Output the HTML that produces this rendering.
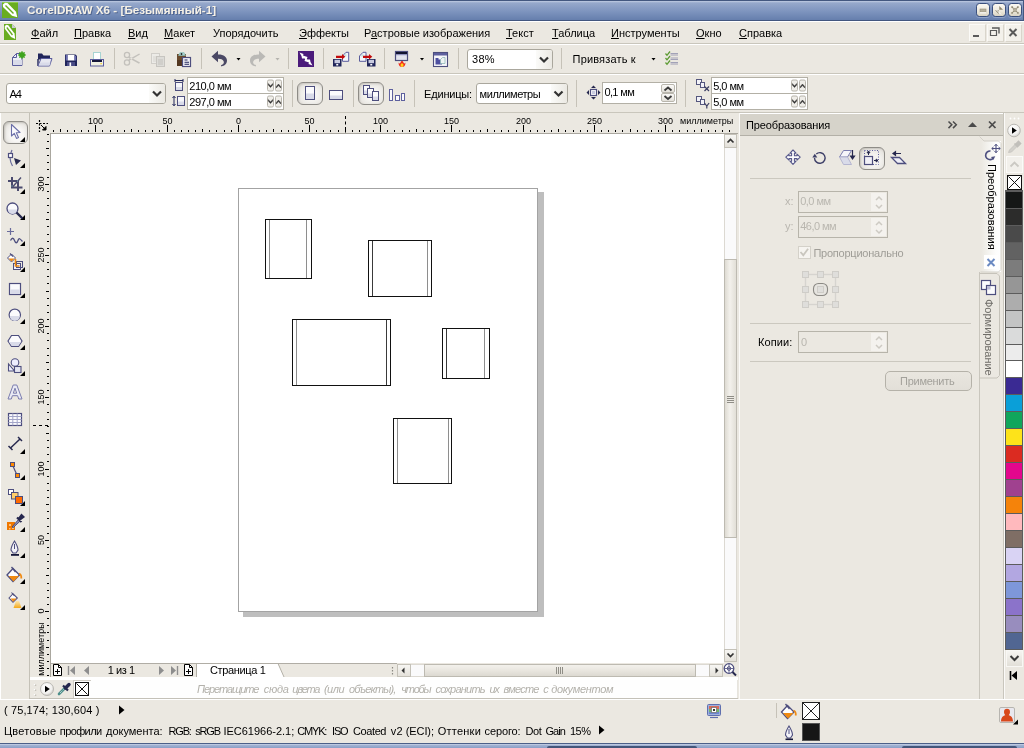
<!DOCTYPE html>
<html><head><meta charset="utf-8"><title>CorelDRAW X6</title>
<style>
*{box-sizing:border-box;margin:0;padding:0}
html,body{width:1024px;height:748px;overflow:hidden;background:#ebe8e1;font-family:"Liberation Sans",sans-serif;font-size:11px;color:#000}
.a{position:absolute}
#w{position:absolute;left:0;top:0;width:1024px;height:748px;will-change:transform;overflow:hidden}
.x{position:absolute;font-size:11px;line-height:13px;white-space:nowrap}
svg{position:absolute;left:0;top:0;overflow:visible}

#title{left:0;top:0;width:1024px;height:21px;border-right:1px solid #43577f;background:linear-gradient(#43577f 0,#43577f 1px,#c2cde3 1px,#a9b9d6 2px,#96a8cb 3px,#8a9ec5 7px,#7c93bd 12px,#6e86b3 17px,#667fad 20px,#42567f 20px,#42567f 21px)}
#title .t{left:27px;top:3px;font-weight:bold;font-size:11.7px;line-height:14px;color:#f6f1e6;white-space:nowrap;text-shadow:1px 1px 0 #51668f}
.wb{position:absolute;top:3px;width:14px;height:14px;border:1px solid #3b507d;border-radius:3.5px;box-shadow:0 1px 0 #8ea2c8;background:linear-gradient(#fbf9f2,#ece8dc 60%,#d8d3c2)}
.mb{position:absolute;top:24px;width:17px;height:18px;background:#f3f1eb;border:1px solid #fbfaf7;border-right-color:#d9d5cb;border-bottom-color:#d9d5cb}
.cb{position:absolute;background:#fff;border:1px solid #aaa79d;border-radius:3px}
.cb i{position:absolute;right:0;top:0;bottom:0;width:16px;background:linear-gradient(90deg,#fbfbf9,#ebe9e3);border-radius:0 2px 2px 0}
.fld{position:absolute;background:#fff;border:1px solid #b3b0a6}
.pbtn{position:absolute;border:1px solid #8e8c87;border-radius:6px;background:radial-gradient(ellipse at 55% 55%,#f7f6f3 30%,#dfdcd6 100%);box-shadow:inset 1px 1px 2px #c9c6c0}
.sp{position:absolute;border:1px solid #b9b6ad;border-radius:2px;background:linear-gradient(#fbfaf8,#e3e0d9)}

.rl{position:absolute;font-size:9px;line-height:10px;white-space:nowrap;text-align:center;width:30px}
.rv{position:absolute;font-size:9px;line-height:10px;white-space:nowrap;text-align:center;width:30px;height:10px;transform:rotate(-90deg);transform-origin:50% 50%}

.sbb{position:absolute;border:1px solid #c9c6bd;background:linear-gradient(90deg,#f6f5f1,#e6e3dc);}

.dfl{position:absolute;border:1px solid #b7b4aa;background:#ebe8e1}
.dfl i{position:absolute;right:1px;top:1px;bottom:1px;width:15px;background:#f4f2ee}
.vt{position:absolute;font-size:11px;line-height:13px;white-space:nowrap;transform:rotate(90deg);transform-origin:0 0}
</style></head><body>
<div id="w"><div id="title" class="a"><div class="a t">CorelDRAW X6 - [Безымянный-1]</div><div class="wb" style="left:976px"></div><div class="wb" style="left:992px"></div><div class="wb" style="left:1008px"></div></div><svg width="1024" height="748" viewBox="0 0 1024 748" ><rect x="2" y="2" width="16" height="16" fill="#69ad21"/><rect x="2" y="2" width="16" height="1" fill="#8fcc4a"/><path d="M2.800 4.500L5 2.800L7.500 3L16 11.800L17.300 17.300L12 15.800L3 7z" fill="#fff"/><path d="M5.500 5.500L13.500 13.500" stroke="#69ad21" stroke-width="1.500"/><rect x="980" y="9" width="6" height="3" fill="#b5af9c" stroke="#98917c" stroke-width=".6"/><rect x="980" y="12.3" width="6" height="1" fill="#fff"/><path d="M999.300 6l3.700 3.700h-3.700z M998.700 14l-3.700-3.700h3.700z" fill="#8d866f"/><path d="M996 9.500l5 5" stroke="#fff" stroke-width="1"/><path d="M1011.500 6.500l7 7M1018.500 6.500l-7 7" stroke="#8d866f" stroke-width="1.700" stroke-dasharray="2 .7"/><circle cx="1015" cy="10" r="1.500" fill="#b5af9c"/></svg><div class="a" style="left:0px;top:21px;width:1024px;height:1px;background:#fff"></div><span class="x" style="left:31px;top:27px;"><u>Ф</u>айл</span><span class="x" style="left:74px;top:27px;"><u>П</u>равка</span><span class="x" style="left:128px;top:27px;"><u>В</u>ид</span><span class="x" style="left:164px;top:27px;"><u>М</u>акет</span><span class="x" style="left:213px;top:27px;">Упоря<u>д</u>очить</span><span class="x" style="left:299px;top:27px;"><u>Э</u>ффекты</span><span class="x" style="left:364px;top:27px;">Р<u>а</u>стровые изображения</span><span class="x" style="left:506px;top:27px;"><u>Т</u>екст</span><span class="x" style="left:552px;top:27px;"><u>Т</u>аблица</span><span class="x" style="left:611px;top:27px;"><u>И</u>нструменты</span><span class="x" style="left:696px;top:27px;"><u>О</u>кно</span><span class="x" style="left:739px;top:27px;"><u>С</u>правка</span><div class="mb" style="left:969px"></div><div class="mb" style="left:987px"></div><div class="mb" style="left:1005px"></div><div class="a" style="left:0px;top:43px;width:1024px;height:1px;background:#c9c6bc"></div><div class="a" style="left:0px;top:44px;width:1024px;height:1px;background:#fff"></div><svg width="1024" height="748" viewBox="0 0 1024 748" ><path d="M4 24h8l4 4v12h-12z" fill="#69ad21"/><path d="M12 24v4h4z" fill="#c9c9d6"/><path d="M4.800 26L6.500 24.800L8.300 25.300L14.500 33.500L15.200 39L11 37L4.800 28.800z" fill="#fff"/><path d="M6.800 27.500L12.500 35" stroke="#69ad21" stroke-width="1.300"/><rect x="973" y="35" width="6" height="2" fill="#5a5a5a"/><path d="M990.5 30.5h6v5h-6z" fill="none" stroke="#5a5a5a" stroke-width="1.2"/><path d="M992 28h7v5.5" fill="none" stroke="#5a5a5a" stroke-width="1.4"/><path d="M1009.5 29l7 7M1016.5 29l-7 7" stroke="#5a5a5a" stroke-width="2"/></svg><div class="a" style="left:114px;top:48px;width:1px;height:21px;background:#c6c2b8"></div><div class="a" style="left:201px;top:48px;width:1px;height:21px;background:#c6c2b8"></div><div class="a" style="left:288px;top:48px;width:1px;height:21px;background:#c6c2b8"></div><div class="a" style="left:323px;top:48px;width:1px;height:21px;background:#c6c2b8"></div><div class="a" style="left:384px;top:48px;width:1px;height:21px;background:#c6c2b8"></div><div class="a" style="left:458px;top:48px;width:1px;height:21px;background:#c6c2b8"></div><div class="a" style="left:561px;top:48px;width:1px;height:21px;background:#c6c2b8"></div><div class="a" style="left:0px;top:73px;width:1024px;height:1px;background:#c9c6bc"></div><div class="a" style="left:0px;top:74px;width:1024px;height:1px;background:#fff"></div><div class="cb" style="left:467px;top:49px;width:86px;height:21px"><i></i></div><span class="x" style="left:472.1px;top:53px;letter-spacing:0.23px;;">38%</span><span class="x" style="left:572.6px;top:53px;letter-spacing:0.16px;;">Привязать к</span><svg width="1024" height="748" viewBox="0 0 1024 748" ><path d="M12.5 57.5l4-4h5.5v12h-9.5z" fill="#eef0f6" stroke="#5a5c9c" stroke-width="1"/><path d="M13 60h9v5h-9z" fill="#d9dbe9"/><path d="M12.5 57.5h4v-4" fill="none" stroke="#5a5c9c" stroke-width="1"/><circle cx="22" cy="55" r="2.8" fill="#2f9a12"/><path d="M22 51.3v7.4M18.3 55h7.4M19.4 52.4l5.2 5.2M24.6 52.4l-5.2 5.2" stroke="#3fa51d" stroke-width="1.3"/><path d="M38 53.5h4l1.5 2h6.5v4h-12z" fill="#20255a"/><path d="M38 59v7" stroke="#20255a" stroke-width="1.4"/><path d="M41 58.5h11l-2.5 7.5h-11.5z" fill="#e6e7f0" stroke="#5a5c9c" stroke-width="1"/><path d="M40 62.5h10.5l-1 3h-10.5z" fill="#d9dbe9"/><path d="M65 54.5h10.5l1.5 1.5v10h-12z" fill="#20255a"/><rect x="67.5" y="55" width="7" height="5.5" fill="#fff"/><rect x="65.8" y="55" width="1.7" height="5.5" fill="#6e70b4"/><rect x="74.5" y="55.8" width="1.7" height="4.7" fill="#6e70b4"/><rect x="67" y="62" width="8" height="4" fill="#4a4c86"/><rect x="69.5" y="62.5" width="1.6" height="3.5" fill="#fff"/><rect x="93.5" y="52.5" width="7" height="8" fill="#fff" stroke="#a8d4d2" stroke-width="1"/><rect x="90.5" y="59.5" width="13" height="6.5" fill="#f1f1e3" stroke="#5a5c9c" stroke-width="1"/><rect x="92" y="60" width="10" height="2" fill="#16183a"/><rect x="100.5" y="63" width="1.2" height="1.2" fill="#f3c400"/><circle cx="127" cy="55" r="2.6" fill="none" stroke="#c3c1bc" stroke-width="1.3"/><circle cx="127" cy="62.5" r="2.6" fill="none" stroke="#c3c1bc" stroke-width="1.3"/><path d="M129 56.5L140 62.5L139 63.8L128.5 58z M129 61L140 54.5L139.2 53.5L128.5 59.5z" fill="#c3c1bc"/><rect x="151.5" y="53.5" width="8" height="10" fill="#ecebe7" stroke="#d0cec9"/><path d="M153 57h4M153 59h4M153 61h3" stroke="#d6d4cf" stroke-width="1"/><rect x="156.500" y="56.5" width="8" height="10" fill="#dddcd8" stroke="#c7c5c0"/><path d="M158 60h5M158 62h5M158 64h5" stroke="#c3c1bc" stroke-width="1"/><rect x="177" y="54" width="9" height="12" fill="#6a4a2c"/><rect x="177" y="60" width="9" height="6" fill="#523620"/><path d="M178.500 55.500l1.500-3h4l1.500 3z" fill="#a5d3cf" stroke="#8abab6" stroke-width=".6"/><circle cx="181.500" cy="54" r=".9" fill="#222"/><rect x="182.500" y="57.500" width="8" height="9" fill="#f3f3f8" stroke="#4d4e7e" stroke-width="1.2"/><path d="M184.500 60h3M184.500 62.300h4.500M184.500 64.300h4.500" stroke="#20255a" stroke-width="1.1"/><path d="M211.500 56.500l6.500-5.700v3.600c5.500-.2 9 2.400 9 6.200c0 3.400-2.400 5.400-5.600 5.800l-.5-1.200c2.600-.8 3.600-2.500 2.600-4.300c-.9-1.600-2.900-2.300-5.500-2.200v3.600z" fill="#4b4965"/><path d="M236.5 58h4l-2 2.500z" fill="#000"/><path d="M265.500 56.500l-6.500-5.700v3.600c-5.500-.2-9 2.400-9 6.200c0 3.400 2.400 5.400 5.600 5.800l.5-1.200c-2.600-.8-3.600-2.500-2.600-4.300c.9-1.600 2.900-2.300 5.500-2.200v3.600z" fill="#bab9b6"/><path d="M275.5 58h4l-2 2.500z" fill="#b5b3ae"/><rect x="298" y="51" width="16" height="16" fill="#4b1b7b"/><path d="M299.500 52.500L303.500 54L303 55.500L307.500 57L306.500 60L304.500 58.500L302 58.500L301.500 56z M312.500 65.500L308.500 64L309 62.500L304.500 61L305.500 58L307.500 59.500L310 59.500L310.500 62z" fill="#fff"/><rect x="333" y="59" width="8.5" height="7.5" fill="#20255a"/><rect x="334.5" y="59.8" width="5.5" height="3.375" fill="#c9cbe0"/><rect x="336.25" y="63.9" width="2" height="1.6" fill="#fff"/><path d="M342.500 56l3.500-3.700h2.700v9h-6.200z" fill="#f4f6fa" stroke="#5a5c9c" stroke-width="1"/><path d="M343.500 56.500l2.800-3v3z" fill="#bfe0dc"/><path d="M336 55.700h6v-1.700l3.300 2.800l-3.300 2.800v-1.700h-6z" fill="#c20a0a"/><path d="M359.500 56l3.500-3.700h3v9h-6.500z" fill="#f4f6fa" stroke="#5a5c9c" stroke-width="1"/><path d="M360.500 56.500l2.800-3v3z" fill="#bfe0dc"/><rect x="367" y="59" width="8.5" height="7.5" fill="#20255a"/><rect x="368.5" y="59.8" width="5.5" height="3.375" fill="#c9cbe0"/><rect x="370.25" y="63.9" width="2" height="1.6" fill="#fff"/><path d="M363 55.700h6v-1.700l3.300 2.800l-3.300 2.800v-1.700h-6z" fill="#c20a0a"/><rect x="395.500" y="51.500" width="12" height="9" fill="#e3e4ee" stroke="#4d4e7e" stroke-width="1.2"/><rect x="396" y="52" width="11" height="2.200" fill="#121430"/><rect x="396" y="54.200" width="11" height="1" fill="#8587b8"/><path d="M398.500 62.500c0 3 1.500 4.500 3.500 4.500s3.500-1.500 3.500-4.500c-1 1.200-1.600 1.200-2 0c-.6-1.200-1-1.500-1.500-1.500c-.5 0-.9.300-1.500 1.500c-.4 1.200-1 1.200-2 0z" fill="#f0281a"/><path d="M400.500 65c0 1.300.7 2 1.500 2s1.500-.7 1.500-2c0-.8-.7-1.800-1.500-1.800s-1.500 1-1.500 1.800z" fill="#ffd21a"/><path d="M420.0 58h4l-2 2.500z" fill="#000"/><rect x="433.500" y="52.500" width="14" height="14" fill="#f6f6fa" stroke="#4d4e7e" stroke-width="1.1"/><rect x="434" y="53" width="13" height="2.500" fill="#5e609e"/><path d="M435.500 58h3v1.500h3.500v5h-6.500z" fill="#4e50a0"/><path d="M440.500 59.500l2-2h2.500v6h-4.500z" fill="#eef3f3" stroke="#8fb8b6" stroke-width=".8"/><path d="M540 57.5l4 4l4 -4" fill="none" stroke="#333" stroke-width="2.2" /><path d="M651.5 58h4l-2 2.500z" fill="#000"/><path d="M670.500 53.5h7.500M670.500 55.0h7.500" stroke="#9a9ab2" stroke-width=".9"/><path d="M665.500 53.5l1.500 1.800l3-3.800" fill="none" stroke="#5c9a32" stroke-width="1.3"/><path d="M670.500 58h7.500M670.500 59.5h7.500" stroke="#9a9ab2" stroke-width=".9"/><path d="M665.500 58l1.500 1.800l3-3.800" fill="none" stroke="#5c9a32" stroke-width="1.3"/><path d="M670.500 62.5h7.500M670.500 64.0h7.500" stroke="#9a9ab2" stroke-width=".9"/><path d="M665.500 62.5l1.500 1.800l3-3.800" fill="none" stroke="#5c9a32" stroke-width="1.3"/></svg><div class="cb" style="left:6px;top:83px;width:160px;height:21px"><i></i></div><span class="x" style="left:9.6px;top:88px;letter-spacing:-1.20px;;">A4</span><div class="fld" style="left:187px;top:77px;width:97px;height:17px"></div><div class="fld" style="left:187px;top:93px;width:97px;height:17px"></div><span class="x" style="left:189.3px;top:80px;letter-spacing:-0.49px;;">210,0 мм</span><span class="x" style="left:189.3px;top:96px;letter-spacing:-0.49px;;">297,0 мм</span><div class="a" style="left:292px;top:80px;width:1px;height:27px;background:#c6c2b8"></div><div class="a" style="left:353px;top:80px;width:1px;height:27px;background:#c6c2b8"></div><div class="a" style="left:414px;top:80px;width:1px;height:27px;background:#c6c2b8"></div><div class="a" style="left:576px;top:80px;width:1px;height:27px;background:#c6c2b8"></div><div class="a" style="left:685px;top:80px;width:1px;height:27px;background:#c6c2b8"></div><div class="pbtn" style="left:297px;top:82px;width:26px;height:23px"></div><div class="pbtn" style="left:358px;top:82px;width:26px;height:23px"></div><span class="x" style="left:424.1px;top:88px;letter-spacing:-0.20px;;">Единицы:</span><div class="cb" style="left:476px;top:83px;width:92px;height:21px"><i></i></div><span class="x" style="left:479.6px;top:88px;letter-spacing:-0.45px;;">миллиметры</span><div class="fld" style="left:602px;top:82px;width:75px;height:22px"></div><span class="x" style="left:604.4px;top:86px;letter-spacing:-0.60px;;">0,1 мм</span><div class="sp" style="left:661px;top:84px;width:14px;height:9px"></div><div class="sp" style="left:661px;top:93px;width:14px;height:9px"></div><div class="fld" style="left:711px;top:77px;width:97px;height:17px"></div><div class="fld" style="left:711px;top:93px;width:97px;height:17px"></div><span class="x" style="left:713.2px;top:80px;letter-spacing:-0.52px;;">5,0 мм</span><span class="x" style="left:713.2px;top:96px;letter-spacing:-0.52px;;">5,0 мм</span><div class="a" style="left:0px;top:112px;width:1024px;height:1px;background:#c9c6bc"></div><svg width="1024" height="748" viewBox="0 0 1024 748" ><path d="M153 91.5l4 4l4 -4" fill="none" stroke="#333" stroke-width="2.2" /><path d="M554.5 91.5l4 4l4 -4" fill="none" stroke="#333" stroke-width="2.2" /><path d="M175 79v3M183 79v3M175 80.500h8" stroke="#20255a" stroke-width="1"/><rect x="175.500" y="82.500" width="7" height="8" fill="#f6f6fa" stroke="#4d4e7e"/><rect x="176" y="87" width="6" height="3" fill="#d9dbe9"/><path d="M174 96.500v9M172.500 98l1.500-1.800l1.500 1.800M172.500 104l1.500 1.800l1.500-1.800" fill="none" stroke="#20255a" stroke-width="1"/><rect x="177.500" y="96.500" width="7" height="9" fill="#f6f6fa" stroke="#4d4e7e"/><rect x="178" y="101.500" width="6" height="3.500" fill="#d9dbe9"/><rect x="267.5" y="80.0" width="6" height="11" rx="1.500" fill="#efede8" stroke="#b8b5ac"/><path d="M268.3 83.5l2.200 2.400l2.200-2.400v1.600l-2.200 2.400l-2.200-2.400z" fill="#2e2e2e" stroke="#2e2e2e" stroke-width=".4"/><rect x="275.5" y="80.0" width="6" height="11" rx="1.500" fill="#efede8" stroke="#b8b5ac"/><path d="M276.3 88.0l2.200-2.400l2.200 2.400v-1.600l-2.200-2.400l-2.200 2.400z" fill="#2e2e2e" stroke="#2e2e2e" stroke-width=".4"/><rect x="267.5" y="96.0" width="6" height="11" rx="1.500" fill="#efede8" stroke="#b8b5ac"/><path d="M268.3 99.5l2.200 2.400l2.200-2.400v1.600l-2.200 2.400l-2.200-2.400z" fill="#2e2e2e" stroke="#2e2e2e" stroke-width=".4"/><rect x="275.5" y="96.0" width="6" height="11" rx="1.500" fill="#efede8" stroke="#b8b5ac"/><path d="M276.3 104.0l2.200-2.400l2.200 2.400v-1.600l-2.200-2.400l-2.200 2.400z" fill="#2e2e2e" stroke="#2e2e2e" stroke-width=".4"/><rect x="791.5" y="80.0" width="6" height="11" rx="1.500" fill="#efede8" stroke="#b8b5ac"/><path d="M792.3 83.5l2.200 2.400l2.200-2.400v1.600l-2.200 2.400l-2.200-2.400z" fill="#2e2e2e" stroke="#2e2e2e" stroke-width=".4"/><rect x="799.5" y="80.0" width="6" height="11" rx="1.500" fill="#efede8" stroke="#b8b5ac"/><path d="M800.3 88.0l2.200-2.400l2.200 2.400v-1.600l-2.200-2.400l-2.200 2.400z" fill="#2e2e2e" stroke="#2e2e2e" stroke-width=".4"/><rect x="791.5" y="96.0" width="6" height="11" rx="1.500" fill="#efede8" stroke="#b8b5ac"/><path d="M792.3 99.5l2.200 2.400l2.200-2.400v1.600l-2.200 2.400l-2.200-2.400z" fill="#2e2e2e" stroke="#2e2e2e" stroke-width=".4"/><rect x="799.5" y="96.0" width="6" height="11" rx="1.500" fill="#efede8" stroke="#b8b5ac"/><path d="M800.3 104.0l2.200-2.400l2.200 2.400v-1.600l-2.200-2.400l-2.200 2.400z" fill="#2e2e2e" stroke="#2e2e2e" stroke-width=".4"/><rect x="305.500" y="86.500" width="9" height="13" fill="#fbfbfd" stroke="#4d4e7e"/><rect x="306" y="93.500" width="8" height="5.500" fill="#d9dbe9"/><rect x="329.500" y="90.500" width="13" height="9" fill="#fbfbfd" stroke="#4d4e7e"/><rect x="330" y="95.500" width="12" height="3.500" fill="#d9dbe9"/><rect x="363.5" y="85.5" width="6" height="9" fill="#fbfbfd" stroke="#4d4e7e"/><rect x="364.0" y="90.5" width="5" height="3.500" fill="#d9dbe9"/><rect x="367.5" y="88.5" width="6" height="9" fill="#fbfbfd" stroke="#4d4e7e"/><rect x="368.0" y="93.5" width="5" height="3.500" fill="#d9dbe9"/><rect x="372.5" y="91.5" width="6" height="9" fill="#fbfbfd" stroke="#4d4e7e"/><rect x="373.0" y="96.5" width="5" height="3.500" fill="#d9dbe9"/><rect x="389.500" y="89.500" width="3" height="11" fill="#fbfbfd" stroke="#5e609e"/><rect x="395.500" y="95.500" width="4" height="5" fill="#fbfbfd" stroke="#5e609e"/><rect x="401.500" y="93.500" width="3" height="7" fill="#fbfbfd" stroke="#5e609e"/><rect x="590.500" y="89.500" width="6" height="6" fill="#fff" stroke="#4d4e7e" stroke-width="1.200"/><rect x="592" y="91" width="3" height="3" fill="#c9cbe0"/><path d="M593.500 85.500l2.500 2.500h-5z M593.500 99.500l2.500-2.500h-5z M586.500 92.500l2.500-2.500v5z M600.500 92.500l-2.500-2.500v5z" fill="#26284e"/><path d="M664.500 90.500l3.500-3l3.500 3" fill="none" stroke="#3a3a3a" stroke-width="1.800"/><path d="M664.500 96l3.500 3l3.500-3" fill="none" stroke="#3a3a3a" stroke-width="1.800"/><rect x="696.500" y="79.5" width="5" height="5" fill="#f2f2f8" stroke="#55577e"/><rect x="700.500" y="82.5" width="4" height="5" fill="#f2f2f8" stroke="#55577e"/><path d="M704.500 86.5l4.500 4.500M709 86.5l-4.500 4.500" stroke="#3a3c62" stroke-width="1.200"/><rect x="696.500" y="96.5" width="5" height="5" fill="#f2f2f8" stroke="#55577e"/><rect x="700.500" y="99.5" width="4" height="5" fill="#f2f2f8" stroke="#55577e"/><path d="M704.500 103l2.300 3l2.300-3M706.800 106v2.500" fill="none" stroke="#3a3c62" stroke-width="1.200"/></svg><div class="a" style="left:0px;top:113px;width:1px;height:587px;background:#fff"></div><div class="a" style="left:29px;top:113px;width:1px;height:587px;background:#c4c1b7"></div><div class="a" style="left:3px;top:121px;width:25px;height:23px;border:1px solid #8e8c87;border-radius:6px;background:radial-gradient(ellipse at 55% 60%,#f8f7f5 35%,#dcd9d3 100%);box-shadow:inset 1px 1px 2px #c4c1bb"></div><svg width="1024" height="748" viewBox="0 0 1024 748" ><path d="M25 137V142H20z" fill="#000"/><path d="M25 163V168H20z" fill="#000"/><path d="M25 189V194H20z" fill="#000"/><path d="M25 215V220H20z" fill="#000"/><path d="M25 241V246H20z" fill="#000"/><path d="M25 267V272H20z" fill="#000"/><path d="M25 293V298H20z" fill="#000"/><path d="M25 319V324H20z" fill="#000"/><path d="M25 345V350H20z" fill="#000"/><path d="M25 371V376H20z" fill="#000"/><path d="M25 449V454H20z" fill="#000"/><path d="M25 475V480H20z" fill="#000"/><path d="M25 501V506H20z" fill="#000"/><path d="M25 527V532H20z" fill="#000"/><path d="M25 553V558H20z" fill="#000"/><path d="M25 579V584H20z" fill="#000"/><path d="M25 605V610H20z" fill="#000"/><path d="M11.500 124.500v11.500l2.800-2.600l2.200 5l2-.9l-2.200-4.800l3.700-.2z" fill="#fafafd" stroke="#6b6fa8" stroke-width="1.100" stroke-linejoin="round"/><path d="M12 150c-2.500 5-2.500 11 .5 16" fill="none" stroke="#6a6c9c" stroke-width="1.200"/><rect x="8.500" y="153.500" width="4" height="4" fill="#fff" stroke="#4d4e7e" stroke-width="1.200"/><path d="M14 158l7 2.500l-5 4.500z" fill="#26284e"/><path d="M12 177v10.500h10.500M8 181h10v10" fill="none" stroke="#4a4a6e" stroke-width="2"/><path d="M12.500 187l8.500-9.500" stroke="#4a4a6e" stroke-width="1.400"/><path d="M12 185.500v1M17 181h1" stroke="#7ec6c0" stroke-width="1"/><circle cx="12.500" cy="208.500" r="5.500" fill="#fbfbfd" stroke="#4d4e7e" stroke-width="1.300"/><path d="M8 209.500h9a4.500 4.500 0 0 1-9 0z" fill="#d9dbe9"/><path d="M16.500 212.500l6 6" stroke="#26284e" stroke-width="2.400"/><path d="M10.500 228v7M7 231.500h7" stroke="#6a6c9c" stroke-width="1.200"/><path d="M10.500 240.500c1.500-3 3-3 4 0s2.500 3 3.500 0s2-2 4.500 1" fill="none" stroke="#4d4e7e" stroke-width="1.300"/><path d="M7.500 258l4-4l4 4l-4 4z" fill="#fff" stroke="#4d4e7e"/><path d="M8.500 258.500h6l-3 3z" fill="#f08a12"/><path d="M10 253.500l3 3" stroke="#4d4e7e" stroke-width="1.200"/><rect x="13.500" y="263.500" width="7" height="6" fill="#eef" stroke="#4d4e7e"/><rect x="16.500" y="261.500" width="6" height="6" fill="none" stroke="#4d4e7e"/><path d="M15.500 259v7h4" fill="none" stroke="#f08a12" stroke-width="1.600"/><rect x="9.500" y="283.500" width="11" height="11" fill="#fbfbfd" stroke="#4d4e7e" stroke-width="1.200"/><rect x="10.200" y="289.500" width="9.600" height="4.400" fill="#d9dbe9"/><circle cx="14.800" cy="314.800" r="5.700" fill="#fbfbfd" stroke="#4d4e7e" stroke-width="1.200"/><path d="M9.800 316h10a5 5 0 0 1-10 0z" fill="#d9dbe9"/><path d="M8 341l3.500-5.500h7l3.500 5.500l-3.500 5.500h-7z" fill="#fbfbfd" stroke="#4d4e7e" stroke-width="1.200"/><path d="M9 342h12l-2.800 4h-6.400z" fill="#d9dbe9"/><circle cx="15" cy="362.500" r="3.800" fill="#eef" stroke="#4d4e7e" stroke-width="1.100"/><path d="M8.500 364v7h6z" fill="#eef" stroke="#4d4e7e" stroke-width="1.100"/><rect x="14.500" y="366.500" width="6.500" height="6" fill="#e4e5f1" stroke="#4d4e7e" stroke-width="1.100"/><path d="M8 399l5.200-14h3.600l5.200 14h-3.300l-1.100-3.300h-5.200l-1.100 3.300z M13.300 393.200h3.400l-1.700-5z" fill="#e9eaf4" stroke="#7a7cae" stroke-width="1" fill-rule="evenodd"/><rect x="8.500" y="413.500" width="13" height="12" fill="#fbfbfd" stroke="#4d4e7e" stroke-width="1.200"/><path d="M8.500 416.500h13M8.500 419.500h13M8.500 422.500h13M12.800 413.500v12M17.200 413.500v12" stroke="#a3a5c8" stroke-width="1"/><path d="M10.500 448l9.500-9" stroke="#26284e" stroke-width="1.500"/><path d="M8.500 446l4 4M18 437l4 4" stroke="#26284e" stroke-width="1.500"/><path d="M12 464l5 11" stroke="#4d4e7e" stroke-width="1.200"/><rect x="10.500" y="462.500" width="4" height="4" fill="#ff8a00" stroke="#4d4e7e"/><rect x="15.500" y="473.500" width="4" height="4" fill="#ff8a00" stroke="#4d4e7e"/><rect x="8.500" y="489.500" width="5" height="5" fill="#fff" stroke="#4d4e7e"/><rect x="11.500" y="492.500" width="6.500" height="6.500" fill="#ffcf6a" stroke="#4d4e7e"/><rect x="15.500" y="496.500" width="7" height="7" fill="#ff6a00" stroke="#4d4e7e"/><rect x="7" y="522" width="8" height="8" fill="#f07800"/><path d="M9 524h2v2h-2zM12 527h2v2h-2zM9 528h1.500v1.500H9z" fill="#ffc27a"/><path d="M12 527l6.500-7.500l1.600 1.600l-7 6.600z" fill="#8a8cb4" stroke="#3a3c66" stroke-width=".8"/><path d="M17 517.500l4.500 4.500M18.500 519l3-4l2 2l-4 3z" stroke="#26284e" stroke-width="2" fill="#26284e"/><path d="M14.500 541c-2.500 4-3.500 7-3.500 9l2 3h3l2-3c0-2-1-5-3.500-9z" fill="#f2f2f8" stroke="#4d4e7e" stroke-width="1.100"/><path d="M14.500 544v5" stroke="#4d4e7e" stroke-width="1"/><rect x="11" y="554" width="8" height="1.800" fill="#16183a"/><path d="M7 575l6-6.500l6.500 6.500l-6.500 6.500z" fill="#fff" stroke="#4d4e7e" stroke-width="1.300"/><path d="M8.500 576h10.500l-5.500 5.500z" fill="#f08a12"/><path d="M11.500 567l4 5" stroke="#4d4e7e" stroke-width="1.300"/><path d="M19 573.500c2 .5 2.500 2 2.300 5" fill="none" stroke="#f08a12" stroke-width="1.800"/><path d="M9 598l4-4.300l4.300 4.300l-4.300 4.300z" fill="#fff" stroke="#4d4e7e" stroke-width="1.100"/><path d="M10.500 598.500h6l-3.300 3.300z" fill="#f08a12"/><path d="M11.500 592.500l3 3.500" stroke="#4d4e7e" stroke-width="1.100"/><defs><linearGradient id="gf" x1="0" y1="0" x2="0" y2="1"><stop offset="0" stop-color="#fbe6b0"/><stop offset="1" stop-color="#f3a81a"/></linearGradient></defs><path d="M16 601h3l2.500 7h-8z" fill="url(#gf)"/></svg><div class="a" style="left:50px;top:133px;width:688px;height:1px;background:#aaa79f"></div><div class="a" style="left:50px;top:133px;width:1px;height:544px;background:#aaa79f"></div><span class="rl" style="left:80.5px;top:116px">100</span><span class="rl" style="left:152.5px;top:116px">50</span><span class="rl" style="left:223.5px;top:116px">0</span><span class="rl" style="left:294.5px;top:116px">50</span><span class="rl" style="left:365.5px;top:116px">100</span><span class="rl" style="left:436.5px;top:116px">150</span><span class="rl" style="left:508.5px;top:116px">200</span><span class="rl" style="left:579.5px;top:116px">250</span><span class="rl" style="left:650.5px;top:116px">300</span><span class="rl" style="left:680px;top:116px;width:auto">миллиметры</span><span class="rv" style="left:25.5px;top:605.5px">0</span><span class="rv" style="left:25.5px;top:534.5px">50</span><span class="rv" style="left:25.5px;top:463.5px">100</span><span class="rv" style="left:25.5px;top:391.5px">150</span><span class="rv" style="left:25.5px;top:320.5px">200</span><span class="rv" style="left:25.5px;top:249.5px">250</span><span class="rv" style="left:25.5px;top:178.5px">300</span><span class="rv" style="left:11px;top:643.5px;width:60px">миллиметры</span><svg width="1024" height="748" viewBox="0 0 1024 748" ><path d="M53 130v2h1v-2zM67 130v2h1v-2zM74 130v2h1v-2zM81 130v2h1v-2zM88 130v2h1v-2zM102 130v2h1v-2zM110 130v2h1v-2zM117 130v2h1v-2zM124 130v2h1v-2zM138 130v2h1v-2zM145 130v2h1v-2zM152 130v2h1v-2zM159 130v2h1v-2zM174 130v2h1v-2zM181 130v2h1v-2zM188 130v2h1v-2zM195 130v2h1v-2zM209 130v2h1v-2zM216 130v2h1v-2zM224 130v2h1v-2zM231 130v2h1v-2zM245 130v2h1v-2zM252 130v2h1v-2zM259 130v2h1v-2zM266 130v2h1v-2zM281 130v2h1v-2zM288 130v2h1v-2zM295 130v2h1v-2zM302 130v2h1v-2zM316 130v2h1v-2zM323 130v2h1v-2zM330 130v2h1v-2zM338 130v2h1v-2zM352 130v2h1v-2zM359 130v2h1v-2zM366 130v2h1v-2zM373 130v2h1v-2zM387 130v2h1v-2zM394 130v2h1v-2zM402 130v2h1v-2zM409 130v2h1v-2zM423 130v2h1v-2zM430 130v2h1v-2zM437 130v2h1v-2zM444 130v2h1v-2zM459 130v2h1v-2zM466 130v2h1v-2zM473 130v2h1v-2zM480 130v2h1v-2zM494 130v2h1v-2zM501 130v2h1v-2zM508 130v2h1v-2zM516 130v2h1v-2zM530 130v2h1v-2zM537 130v2h1v-2zM544 130v2h1v-2zM551 130v2h1v-2zM565 130v2h1v-2zM573 130v2h1v-2zM580 130v2h1v-2zM587 130v2h1v-2zM601 130v2h1v-2zM608 130v2h1v-2zM615 130v2h1v-2zM622 130v2h1v-2zM637 130v2h1v-2zM644 130v2h1v-2zM651 130v2h1v-2zM658 130v2h1v-2zM672 130v2h1v-2zM679 130v2h1v-2zM687 130v2h1v-2zM694 130v2h1v-2zM708 130v2h1v-2zM715 130v2h1v-2zM722 130v2h1v-2zM729 130v2h1v-2zM60 129v3h1v-3zM131 129v3h1v-3zM202 129v3h1v-3zM273 129v3h1v-3zM345 129v3h1v-3zM416 129v3h1v-3zM487 129v3h1v-3zM558 129v3h1v-3zM630 129v3h1v-3zM701 129v3h1v-3zM95 125v7h1v-7zM167 125v7h1v-7zM238 125v7h1v-7zM309 125v7h1v-7zM380 125v7h1v-7zM451 125v7h1v-7zM523 125v7h1v-7zM594 125v7h1v-7zM665 125v7h1v-7z" fill="#000" shape-rendering="crispEdges"/><path d="M47 675h2v1h-2zM47 668h2v1h-2zM47 661h2v1h-2zM47 654h2v1h-2zM47 640h2v1h-2zM47 632h2v1h-2zM47 625h2v1h-2zM47 618h2v1h-2zM47 604h2v1h-2zM47 597h2v1h-2zM47 590h2v1h-2zM47 583h2v1h-2zM47 568h2v1h-2zM47 561h2v1h-2zM47 554h2v1h-2zM47 547h2v1h-2zM47 533h2v1h-2zM47 526h2v1h-2zM47 518h2v1h-2zM47 511h2v1h-2zM47 497h2v1h-2zM47 490h2v1h-2zM47 483h2v1h-2zM47 476h2v1h-2zM47 461h2v1h-2zM47 454h2v1h-2zM47 447h2v1h-2zM47 440h2v1h-2zM47 426h2v1h-2zM47 419h2v1h-2zM47 412h2v1h-2zM47 404h2v1h-2zM47 390h2v1h-2zM47 383h2v1h-2zM47 376h2v1h-2zM47 369h2v1h-2zM47 355h2v1h-2zM47 348h2v1h-2zM47 340h2v1h-2zM47 333h2v1h-2zM47 319h2v1h-2zM47 312h2v1h-2zM47 305h2v1h-2zM47 298h2v1h-2zM47 283h2v1h-2zM47 276h2v1h-2zM47 269h2v1h-2zM47 262h2v1h-2zM47 248h2v1h-2zM47 241h2v1h-2zM47 234h2v1h-2zM47 226h2v1h-2zM47 212h2v1h-2zM47 205h2v1h-2zM47 198h2v1h-2zM47 191h2v1h-2zM47 177h2v1h-2zM47 169h2v1h-2zM47 162h2v1h-2zM47 155h2v1h-2zM47 141h2v1h-2zM47 134h2v1h-2zM46 647h3v1h-3zM46 575h3v1h-3zM46 504h3v1h-3zM46 433h3v1h-3zM46 362h3v1h-3zM46 291h3v1h-3zM46 219h3v1h-3zM46 148h3v1h-3zM45 611h4v1h-4zM45 540h4v1h-4zM45 469h4v1h-4zM45 397h4v1h-4zM45 326h4v1h-4zM45 255h4v1h-4zM45 184h4v1h-4z" fill="#000" shape-rendering="crispEdges"/><path d="M33 425.500h17" stroke="#000" stroke-width="1" stroke-dasharray="3 3"/><path d="M345.500 116v17" stroke="#000" stroke-width="1" stroke-dasharray="3 2.500"/><path d="M39.500 120v12M36 123.500h12" stroke="#000" stroke-width="1.200" stroke-dasharray="2 1.500"/><path d="M41 125l4.500 4.500M46 126.500v3.500h-3.500z" stroke="#000" stroke-width="1" fill="#000"/></svg><div class="a" style="left:51px;top:134px;width:673px;height:529px;background:#fff"></div><div class="a" style="left:243px;top:192px;width:301px;height:425px;background:#bebebe"></div><div class="a" style="left:238px;top:188px;width:300px;height:424px;background:#fff;border:1px solid #a3a3a3"></div><svg width="1024" height="748" viewBox="0 0 1024 748" shape-rendering="crispEdges"><rect x="265.5" y="219.5" width="46" height="59" fill="none" stroke="#111" stroke-width="1"/><rect x="269" y="220" width="1" height="58" fill="#8e8e8e"/><rect x="306" y="220" width="1" height="58" fill="#8e8e8e"/><rect x="368.5" y="240.5" width="63" height="56" fill="none" stroke="#111" stroke-width="1"/><rect x="372" y="241" width="1" height="55" fill="#3a3a3a"/><rect x="427" y="241" width="1" height="55" fill="#8e8e8e"/><rect x="292.5" y="319.5" width="98" height="66" fill="none" stroke="#111" stroke-width="1"/><rect x="296" y="320" width="1" height="65" fill="#8e8e8e"/><rect x="386" y="320" width="1" height="65" fill="#3a3a3a"/><rect x="442.5" y="328.5" width="47" height="50" fill="none" stroke="#111" stroke-width="1"/><rect x="446" y="329" width="1" height="49" fill="#3a3a3a"/><rect x="484" y="329" width="1" height="49" fill="#8e8e8e"/><rect x="393.5" y="418.5" width="58" height="65" fill="none" stroke="#111" stroke-width="1"/><rect x="397" y="419" width="1" height="64" fill="#8e8e8e"/><rect x="448" y="419" width="1" height="64" fill="#8e8e8e"/></svg><div class="a" style="left:724px;top:134px;width:13px;height:528px;background:#fafafb;border-left:1px solid #dcd9d2;border-right:1px solid #dcd9d2"></div><div class="a" style="left:724px;top:134px;width:13px;height:14px;background:linear-gradient(#f7f6f3,#e4e1da);border:1px solid #c4c1b8"></div><div class="a" style="left:724px;top:649px;width:13px;height:13px;background:linear-gradient(#f7f6f3,#e4e1da);border:1px solid #c4c1b8"></div><div class="a" style="left:724px;top:259px;width:13px;height:279px;background:linear-gradient(90deg,#dedbd3,#f3f1ec 45%,#e2dfd7);border:1px solid #bdbab1"></div><svg width="1024" height="748" viewBox="0 0 1024 748" ><path d="M727.500 142.500l3-3l3 3" fill="none" stroke="#333" stroke-width="1.700"/><path d="M727.500 653.500l3 3l3-3" fill="none" stroke="#333" stroke-width="1.700"/><path d="M727 396.500h7M727 398.500h7M727 400.500h7M727 402.500h7" stroke="#8f8d86" stroke-width="1"/></svg><div class="a" style="left:739px;top:113px;width:1px;height:587px;background:#fbfaf8"></div><div class="a" style="left:740px;top:113px;width:264px;height:1px;background:#fff"></div><div class="a" style="left:740px;top:114px;width:264px;height:21px;background:#d6d3ca"></div><div class="a" style="left:740px;top:135px;width:264px;height:1px;background:#b3b0a7"></div><span class="x" style="left:746.0px;top:119px;letter-spacing:-0.12px;;">Преобразования</span><div class="a" style="left:750px;top:178px;width:221px;height:1px;background:#cbc8bf"></div><div class="a" style="left:750px;top:323px;width:221px;height:1px;background:#cbc8bf"></div><div class="a" style="left:750px;top:361px;width:221px;height:1px;background:#cbc8bf"></div><div class="a" style="left:859px;top:147px;width:26px;height:23px;border:1px solid #8e8c87;border-radius:6px;background:radial-gradient(ellipse at 55% 60%,#f4f3f0 35%,#dcd9d3 100%);box-shadow:inset 1px 1px 2px #c4c1bb"></div><div class="dfl" style="left:798px;top:191px;width:90px;height:22px"><i></i></div><div class="dfl" style="left:798px;top:216px;width:90px;height:22px"><i></i></div><div class="dfl" style="left:798px;top:331px;width:90px;height:22px"><i></i></div><span class="x" style="left:785px;top:195px;color:#b9b6af;">x:</span><span class="x" style="left:785px;top:220px;color:#b9b6af;">y:</span><span class="x" style="left:800.2px;top:195px;letter-spacing:-0.54px;;color:#b9b6af;">0,0 мм</span><span class="x" style="left:800.3px;top:220px;letter-spacing:-0.55px;;color:#b9b6af;">46,0 мм</span><span class="x" style="left:801px;top:336px;color:#b9b6af;">0</span><span class="x" style="left:757.9px;top:336px;letter-spacing:0.11px;;">Копии:</span><div class="a" style="left:798px;top:246px;width:13px;height:13px;border:1px solid #d4d1c9;background:#f6f4f0"></div><span class="x" style="left:813.4px;top:247px;letter-spacing:-0.23px;;color:#9f9d97">Пропорционально</span><div class="a" style="left:885px;top:371px;width:87px;height:20px;border:1px solid #b5b2a9;border-radius:5px;background:linear-gradient(#e9e6df,#e2dfd8)"></div><span class="x" style="left:900.1px;top:374.5px;letter-spacing:-0.29px;;color:#a3a19b">Применить</span><div class="a" style="left:979px;top:272px;width:1px;height:428px;background:#c9c6bd"></div><div class="a" style="left:1003px;top:113px;width:1px;height:587px;background:#c9c6bd"></div><div class="a" style="left:980px;top:141px;width:21px;height:131px;background:linear-gradient(90deg,#ebe8e1 5%,#f4f3ef 40%,#fdfdfc 75%,#fff);"></div><div class="a" style="left:984px;top:255px;width:14px;height:14px;background:#fff"></div><span class="vt" style="left:998px;top:164px">Преобразования</span><span class="vt" style="left:995px;top:299px;color:#6f6d68">Формирование</span><svg width="1024" height="748" viewBox="0 0 1024 748" ><path d="M948.500 121.500l3.300 3.300l-3.300 3.300M953 121.500l3.300 3.300l-3.300 3.300" fill="none" stroke="#4a4a4a" stroke-width="1.500"/><path d="M968 127h9l-4.500-4.700z" fill="#4a4a4a"/><path d="M989 121.500l6.500 6.500M995.500 121.500l-6.500 6.500" stroke="#4a4a4a" stroke-width="1.700"/><path d="M793.0 150.0L796.0 153.2L794.4 153.2L794.4 155.8L797.0 155.8L797.0 154.2L800.2 157.2L797.0 160.2L797.0 158.6L794.4 158.6L794.4 161.2L796.0 161.2L793.0 164.4L790.0 161.2L791.6 161.2L791.6 158.6L789.0 158.6L789.0 160.2L785.8 157.2L789.0 154.2L789.0 155.8L791.6 155.8L791.6 153.2L790.0 153.2z" fill="#fdfdfe" stroke="#55578a" stroke-width="1.100" stroke-linejoin="round"/><path d="M814.500 158a5.300 5.300 0 1 0 1.800-4" fill="none" stroke="#3e4068" stroke-width="1.400"/><path d="M812.300 157.500h5l-2.500-3.800z" fill="#3e4068"/><path d="M839.500 157l4-6.500h8l-4 6.500z" fill="#f6f6fa" stroke="#7a7cae" stroke-width="1"/><path d="M839.500 157l4 7.500h8l-4-7.500z" fill="#d9dbe9" stroke="#b5b6d0" stroke-width="1"/><path d="M852.500 150v8M850.500 156l2 3l2-3z" stroke="#26284e" stroke-width="1.200" fill="#26284e"/><rect x="864.500" y="150.500" width="14" height="14" fill="none" stroke="#5e609e" stroke-width="1" stroke-dasharray="1 1.500"/><rect x="864.500" y="156.500" width="8" height="8" fill="#f1f1f7" stroke="#4d4e7e" stroke-width="1.200"/><path d="M868.500 155v-3.500M867 152.800l1.500-1.800l1.500 1.800zM874 160.500h3.500M876.200 159l1.800 1.500l-1.800 1.500z" stroke="#26284e" stroke-width="1" fill="#26284e"/><path d="M891.500 157.500h8l6 6h-8z" fill="#eeeef6" stroke="#4d4e7e" stroke-width="1.300"/><path d="M893 153.500h8M893 153.500l2.500-1.800v3.600z" stroke="#26284e" stroke-width="1.200" fill="#26284e"/><path d="M876 200l3-3l3 3M876 205l3 3l3-3" fill="none" stroke="#cdcac3" stroke-width="1.500"/><path d="M876 225l3-3l3 3M876 230l3 3l3-3" fill="none" stroke="#cdcac3" stroke-width="1.500"/><path d="M876 340l3-3l3 3M876 345l3 3l3-3" fill="none" stroke="#cdcac3" stroke-width="1.500"/><path d="M800.500 252l2.800 3.200l4.800-6.400" fill="none" stroke="#c9c6be" stroke-width="1.800"/><rect x="805.500" y="274.500" width="30" height="30" fill="none" stroke="#d6d4cf" stroke-width="1.400"/><rect x="802.5" y="271.5" width="6" height="6" fill="#dfdedb" stroke="#cfcdc8"/><rect x="802.5" y="286.5" width="6" height="6" fill="#dfdedb" stroke="#cfcdc8"/><rect x="802.5" y="301.5" width="6" height="6" fill="#dfdedb" stroke="#cfcdc8"/><rect x="817.5" y="271.5" width="6" height="6" fill="#dfdedb" stroke="#cfcdc8"/><rect x="813.500" y="283.500" width="14" height="12" rx="5" fill="#e6e4df" stroke="#8b8984" stroke-width="1.100"/><rect x="817.5" y="286.5" width="6" height="6" fill="#dfdedb" stroke="#cfcdc8"/><rect x="817.5" y="301.5" width="6" height="6" fill="#dfdedb" stroke="#cfcdc8"/><rect x="832.5" y="271.5" width="6" height="6" fill="#dfdedb" stroke="#cfcdc8"/><rect x="832.5" y="286.5" width="6" height="6" fill="#dfdedb" stroke="#cfcdc8"/><rect x="832.5" y="301.5" width="6" height="6" fill="#dfdedb" stroke="#cfcdc8"/><path d="M979.500 136.500l4.500 4.500h14.500l2.500 2.500v126l-2.500 2.500h-18" fill="none" stroke="#d3d0c8" stroke-width="1"/><path d="M979.500 273.500h17.500l2.500 2.500v99.500l-2.500 2.500h-17.500" fill="none" stroke="#c6c3ba" stroke-width="1"/><path d="M990.500 151a4.300 4.300 0 1 0 3 6.800" fill="none" stroke="#4e5080" stroke-width="1.600"/><path d="M991 157l4.300-.8l-2 3.800z" fill="#4e5080"/><path d="M996 144.500v8M992 148.500h8" stroke="#4e5080" stroke-width="1.100"/><path d="M994.500 146l1.500-1.800l1.500 1.800M994.500 151l1.500 1.800l1.500-1.800M993.500 147l-1.800 1.500l1.800 1.500M998.500 147l1.800 1.500l-1.800 1.500" fill="none" stroke="#4e5080" stroke-width="1"/><path d="M987.500 259l7 7M994.500 259l-7 7" stroke="#6b8ac2" stroke-width="2"/><rect x="981.500" y="280.500" width="9" height="9" fill="#fbfbfd" stroke="#4d4e7e" stroke-width="1.200"/><rect x="986.500" y="285.500" width="9" height="9" fill="#fbfbfd" stroke="#4d4e7e" stroke-width="1.200"/><rect x="987" y="286" width="3.500" height="3.500" fill="#b9bad4"/></svg><div class="a" style="left:1004px;top:113px;width:1px;height:587px;background:#fbfaf8"></div><div class="a" style="left:1005px;top:190px;width:18px;height:460px;background:#5c5c5c"></div><div class="a" style="left:1006px;top:192px;width:16px;height:16px;background:#151716"></div><div class="a" style="left:1006px;top:209px;width:16px;height:16px;background:#2c2c2b"></div><div class="a" style="left:1006px;top:226px;width:16px;height:16px;background:#4a4a4a"></div><div class="a" style="left:1006px;top:243px;width:16px;height:16px;background:#626262"></div><div class="a" style="left:1006px;top:260px;width:16px;height:16px;background:#7c7c7c"></div><div class="a" style="left:1006px;top:277px;width:16px;height:16px;background:#969696"></div><div class="a" style="left:1006px;top:294px;width:16px;height:16px;background:#adadad"></div><div class="a" style="left:1006px;top:311px;width:16px;height:16px;background:#c3c4c4"></div><div class="a" style="left:1006px;top:328px;width:16px;height:16px;background:#dadbdb"></div><div class="a" style="left:1006px;top:345px;width:16px;height:15px;background:#ececec"></div><div class="a" style="left:1006px;top:361px;width:16px;height:16px;background:#ffffff"></div><div class="a" style="left:1006px;top:378px;width:16px;height:16px;background:#3a2a93"></div><div class="a" style="left:1006px;top:395px;width:16px;height:16px;background:#0a9fd8"></div><div class="a" style="left:1006px;top:412px;width:16px;height:16px;background:#10a65c"></div><div class="a" style="left:1006px;top:429px;width:16px;height:16px;background:#fde31a"></div><div class="a" style="left:1006px;top:446px;width:16px;height:16px;background:#db2b21"></div><div class="a" style="left:1006px;top:463px;width:16px;height:16px;background:#e3078d"></div><div class="a" style="left:1006px;top:480px;width:16px;height:16px;background:#a0418f"></div><div class="a" style="left:1006px;top:497px;width:16px;height:16px;background:#f5830a"></div><div class="a" style="left:1006px;top:514px;width:16px;height:16px;background:#ffb9bd"></div><div class="a" style="left:1006px;top:531px;width:16px;height:16px;background:#7f6e65"></div><div class="a" style="left:1006px;top:548px;width:16px;height:16px;background:#d9d3f4"></div><div class="a" style="left:1006px;top:565px;width:16px;height:16px;background:#b2a7e1"></div><div class="a" style="left:1006px;top:582px;width:16px;height:16px;background:#7e97d9"></div><div class="a" style="left:1006px;top:599px;width:16px;height:16px;background:#8b73ca"></div><div class="a" style="left:1006px;top:616px;width:16px;height:16px;background:#988dbe"></div><div class="a" style="left:1006px;top:633px;width:16px;height:16px;background:#516692"></div><div class="a" style="left:1007px;top:175px;width:15px;height:15px;background:#fff;border:1.5px solid #111"></div><div class="a" style="left:1006px;top:156px;width:17px;height:17px;background:#f2f0eb;border:1px solid #fbfaf8"></div><div class="a" style="left:1006px;top:650px;width:17px;height:17px;background:linear-gradient(#f6f5f1,#e2dfd8);border:1px solid #f8f7f4"></div><svg width="1024" height="748" viewBox="0 0 1024 748" ><path d="M1008.500 176.500l12 12M1020.500 176.500l-12 12" stroke="#111" stroke-width="1"/><circle cx="1010.500" cy="118.500" r=".9" fill="#fff"/><circle cx="1014.500" cy="118.500" r=".9" fill="#fff"/><circle cx="1018.500" cy="118.500" r=".9" fill="#fff"/><defs><radialGradient id="pb" cx=".4" cy=".35" r=".7"><stop offset="0" stop-color="#fff"/><stop offset=".7" stop-color="#f1f0ee"/><stop offset="1" stop-color="#c9c7c2"/></radialGradient></defs><circle cx="1014" cy="130.500" r="6.300" fill="url(#pb)" stroke="#b9b7b2" stroke-width="1"/><path d="M1012 127.300v6.400l4.800-3.200z" fill="#000"/><path d="M1008.500 152.500l1-2.500l6-6l2 2l-6 6z" fill="#d2d0cb" stroke="#c4c2bd" stroke-width=".8"/><path d="M1014.500 143.500l3.500 3.500M1015.500 144.500l3-3l2 2l-3 3z" stroke="#c1bfba" stroke-width="1.600" fill="#c1bfba"/><path d="M1010.500 166.500l4-4l4 4" fill="none" stroke="#cbc9c3" stroke-width="1.800"/><path d="M1010.500 656l4 4l4-4" fill="none" stroke="#3c3c3c" stroke-width="2"/><path d="M1010.500 671v9" stroke="#000" stroke-width="1.600"/><path d="M1017 671v9l-5.500-4.500z" fill="#000"/></svg><div class="a" style="left:51px;top:663px;width:686px;height:14px;background:#ebe8e1"></div><div class="a" style="left:51px;top:663px;width:346px;height:1px;background:#b0ada5"></div><div class="a" style="left:197px;top:664px;width:88px;height:13px;background:#fff;clip-path:polygon(0 0,81px 0,87px 13px,0 13px)"></div><span class="x" style="left:107.7px;top:664px;letter-spacing:-0.43px;;">1 из 1</span><span class="x" style="left:209.9px;top:664px;letter-spacing:-0.34px;;">Страница 1</span><div class="a" style="left:397px;top:664px;width:326px;height:13px;background:#fafafb;border-top:1px solid #dcd9d2;border-bottom:1px solid #dcd9d2"></div><div class="a" style="left:397px;top:664px;width:14px;height:13px;background:linear-gradient(#f7f6f3,#e4e1da);border:1px solid #c4c1b8"></div><div class="a" style="left:709px;top:664px;width:14px;height:13px;background:linear-gradient(#f7f6f3,#e4e1da);border:1px solid #c4c1b8"></div><div class="a" style="left:424px;top:664px;width:272px;height:13px;background:linear-gradient(#f3f1ec,#e9e6df 50%,#dcd9d1);border:1px solid #bdbab1"></div><div class="a" style="left:30px;top:677px;width:709px;height:3px;background:#fff"></div><div class="a" style="left:30px;top:680px;width:43px;height:18px;background:#ebe8e1"></div><div class="a" style="left:73px;top:680px;width:666px;height:18px;background:#fefefe"></div><div class="a" style="left:30px;top:698px;width:709px;height:1px;background:#c4c1b8"></div><div class="a" style="left:738px;top:663px;width:1px;height:36px;background:#ebe8e1"></div><span class="x" style="left:197.1px;top:683px;letter-spacing:-1.09px;font-style:italic;color:#b3b1ab">Перетащите</span><span class="x" style="left:263.7px;top:683px;letter-spacing:-0.29px;font-style:italic;color:#b3b1ab">сюда</span><span class="x" style="left:292.3px;top:683px;letter-spacing:-1.20px;font-style:italic;color:#b3b1ab">цвета</span><span class="x" style="left:323.9px;top:683px;letter-spacing:-0.44px;font-style:italic;color:#b3b1ab">(или</span><span class="x" style="left:349.0px;top:683px;letter-spacing:-0.86px;font-style:italic;color:#b3b1ab">объекты),</span><span class="x" style="left:401.3px;top:683px;letter-spacing:-1.19px;font-style:italic;color:#b3b1ab">чтобы</span><span class="x" style="left:435.5px;top:683px;letter-spacing:-0.77px;font-style:italic;color:#b3b1ab">сохранить</span><span class="x" style="left:489.4px;top:683px;letter-spacing:-1.20px;font-style:italic;color:#b3b1ab">их</span><span class="x" style="left:503.5px;top:683px;letter-spacing:-0.77px;font-style:italic;color:#b3b1ab">вместе</span><span class="x" style="left:543.3px;top:683px;letter-spacing:-0.30px;font-style:italic;color:#b3b1ab">с</span><span class="x" style="left:551.2px;top:683px;letter-spacing:-0.32px;font-style:italic;color:#b3b1ab">документом</span><div class="a" style="left:73px;top:680px;width:18px;height:1px;background:#cfccc4"></div><div class="a" style="left:73px;top:680px;width:1px;height:18px;background:#cfccc4"></div><div class="a" style="left:737px;top:680px;width:1px;height:18px;background:#e6e4de"></div><div class="a" style="left:75px;top:682px;width:14px;height:14px;background:#fff;border:1.5px solid #111"></div><div class="a" style="left:0px;top:699px;width:1024px;height:1px;background:#fff"></div><span class="x" style="left:3.9px;top:704px;letter-spacing:0.14px;;">( 75,174; 130,604 )</span><span class="x" style="left:3.9px;top:725px;letter-spacing:0.25px;;">Цветовые</span><span class="x" style="left:59.8px;top:725px;letter-spacing:-0.61px;;">профили</span><span class="x" style="left:106.0px;top:725px;letter-spacing:-0.01px;;">документа:</span><span class="x" style="left:168.6px;top:725px;letter-spacing:-1.20px;;">RGB:</span><span class="x" style="left:195.3px;top:725px;letter-spacing:-1.20px;;">sRGB</span><span class="x" style="left:223.4px;top:725px;letter-spacing:-0.01px;;">IEC61966-2.1;</span><span class="x" style="left:297.3px;top:725px;letter-spacing:-1.20px;;">CMYK:</span><span class="x" style="left:332.1px;top:725px;letter-spacing:-1.20px;;">ISO</span><span class="x" style="left:353.1px;top:725px;letter-spacing:-0.42px;;">Coated</span><span class="x" style="left:390.8px;top:725px;letter-spacing:0.18px;;">v2</span><span class="x" style="left:405.8px;top:725px;letter-spacing:-0.11px;;">(ECI);</span><span class="x" style="left:437.7px;top:725px;letter-spacing:0.24px;;">Оттенки</span><span class="x" style="left:484.6px;top:725px;letter-spacing:-0.12px;;">серого:</span><span class="x" style="left:525.4px;top:725px;letter-spacing:-0.36px;;">Dot</span><span class="x" style="left:545.5px;top:725px;letter-spacing:-0.95px;;">Gain</span><span class="x" style="left:569.9px;top:725px;letter-spacing:-0.47px;;">15%</span><div class="a" style="left:776px;top:703px;width:1px;height:15px;background:#c6c2b8"></div><div class="a" style="left:802px;top:702px;width:18px;height:18px;background:#fff;border:1px solid #222"></div><div class="a" style="left:802px;top:723px;width:18px;height:18px;background:#161616;border:1px solid #555"></div><div class="a" style="left:0px;top:743px;width:1024px;height:1px;background:#4b5f88"></div><div class="a" style="left:0px;top:744px;width:1024px;height:1px;background:#bcc8e0"></div><div class="a" style="left:0px;top:745px;width:1024px;height:3px;background:linear-gradient(#a3b3d3,#8a9fc6)"></div><div class="a" style="left:547px;top:746px;width:150px;height:2px;background:#44567a;border-radius:2px 2px 0 0"></div><div class="a" style="left:902px;top:746px;width:115px;height:2px;background:#44567a;border-radius:2px 2px 0 0"></div><svg width="1024" height="748" viewBox="0 0 1024 748" ><path d="M53.5 664.5h5l3 3v8h-8z" fill="#fdfdfd" stroke="#000" stroke-width="1"/><path d="M58.5 664.5v3h3" fill="none" stroke="#000" stroke-width="1"/><path d="M55 671.5h5M57.5 669v5" stroke="#000" stroke-width="1"/><path d="M184.5 664.5h5l3 3v8h-8z" fill="#fdfdfd" stroke="#000" stroke-width="1"/><path d="M189.5 664.5v3h3" fill="none" stroke="#000" stroke-width="1"/><path d="M186 671.5h5M188.5 669v5" stroke="#000" stroke-width="1"/><path d="M196.500 677v-13M278 663.500l6 13.500" fill="none" stroke="#b3b0a7" stroke-width="1"/><path d="M68.500 666v9" stroke="#8e8e8e" stroke-width="1.400"/><path d="M75 666v9l-5-4.500z" fill="#8e8e8e"/><path d="M89 666v9l-5-4.500z" fill="#8e8e8e"/><path d="M159 666v9l5-4.500z" fill="#8e8e8e"/><path d="M171 666v9l5-4.500z" fill="#8e8e8e"/><path d="M177.500 666v9" stroke="#8e8e8e" stroke-width="1.400"/><path d="M392.500 667v1.500M392.500 670v1.500M392.500 673v1.500" stroke="#8c8a84" stroke-width="1.200"/><path d="M401.500 670.500l3-3v6z M718.500 670.500l-3-3v6z" fill="#333"/><path d="M556.500 667v7M558.500 667v7M560.500 667v7M562.500 667v7" stroke="#8f8d86" stroke-width="1"/><circle cx="729" cy="668.500" r="4.800" fill="#fff" stroke="#4d4e7e" stroke-width="1.300"/><circle cx="729" cy="668.500" r="1.800" fill="none" stroke="#4d4e7e" stroke-width="1"/><path d="M729 664v9M724.500 668.500h9" stroke="#4d4e7e" stroke-width=".8"/><path d="M732.500 672l3.500 3.500" stroke="#26284e" stroke-width="2"/><path d="M35.500 684.500v1.500M35.500 689.500v1.500M35.500 694.500v1.500" stroke="#c2bfb7" stroke-width="1.500"/><path d="M34.500 684v1.200M34.500 689v1.200M34.500 694v1.200" stroke="#fff" stroke-width="1.300"/><defs><radialGradient id="pb2" cx=".4" cy=".35" r=".7"><stop offset="0" stop-color="#fff"/><stop offset=".7" stop-color="#f1f0ee"/><stop offset="1" stop-color="#c4c2bd"/></radialGradient></defs><circle cx="47" cy="689" r="6.500" fill="url(#pb2)" stroke="#b9b7b2" stroke-width="1"/><path d="M45 685.800v6.400l4.800-3.200z" fill="#000"/><path d="M59 694l6.500-6.500" stroke="#4f8f8b" stroke-width="2.600" stroke-linecap="round"/><path d="M60 693l5-5" stroke="#e8f4f3" stroke-width=".9" stroke-dasharray="1 1"/><path d="M63 685.500l5 5" stroke="#26284e" stroke-width="2.200"/><path d="M65.500 688l3.500-3.500" stroke="#26284e" stroke-width="3.400" stroke-linecap="round"/><path d="M76.500 683.500l11 11M87.500 683.500l-11 11" stroke="#111" stroke-width="1"/><path d="M119 705.500v9l5.500-4.500z" fill="#000"/><path d="M599 725.500v9l5.500-4.500z" fill="#000"/><rect x="707.500" y="704.500" width="13" height="11" rx="1" fill="#9fb0dc" stroke="#5f6fae"/><rect x="709" y="706" width="10" height="3" fill="#d96a5a"/><rect x="709" y="709" width="3" height="4" fill="#6fb56a"/><rect x="716" y="709" width="3" height="4" fill="#6fb56a"/><rect x="709" y="712" width="10" height="2" fill="#6a86d0"/><rect x="711.500" y="707.500" width="5" height="5" fill="#fff" stroke="#777" stroke-width=".8"/><rect x="713" y="709" width="2" height="2" fill="#333"/><path d="M710 717.500h8" stroke="#5f6fae" stroke-width="1.200"/><path d="M781.500 712l6-6.500l6.500 6.500l-6.500 6.500z" fill="#fff" stroke="#4d4e7e" stroke-width="1.300"/><path d="M783 713h10.500l-5.500 5.500z" fill="#f08a12"/><path d="M785.500 704l4 5" stroke="#4d4e7e" stroke-width="1.300"/><path d="M793.500 710.500c2 .5 2.500 2 2.300 5" fill="none" stroke="#f08a12" stroke-width="1.800"/><path d="M803 703l16 16M819 703l-16 16" stroke="#222" stroke-width="1"/><path d="M789 726c-2.500 4-3.500 7-3.500 9l2 3h3l2-3c0-2-1-5-3.500-9z" fill="#f2f2f8" stroke="#4d4e7e" stroke-width="1.100"/><path d="M789 729v5" stroke="#4d4e7e" stroke-width="1"/><rect x="785.500" y="738.500" width="7.500" height="1.600" fill="#16183a"/><rect x="999.500" y="707.500" width="15" height="15" rx="1.500" fill="#e9e8ee" stroke="#b7b5b0"/><path d="M1004 712a3 3.200 0 1 1 6 0c0 1.500-.8 2.500-1.200 3.200c2.500.8 4 2 4.200 6.300h-12c.2-4.300 1.700-5.500 4.200-6.300c-.4-.7-1.200-1.700-1.200-3.200z" fill="#d8481c"/><path d="M1018 719.500v5h-5z" fill="#000"/></svg></div>
</body></html>
